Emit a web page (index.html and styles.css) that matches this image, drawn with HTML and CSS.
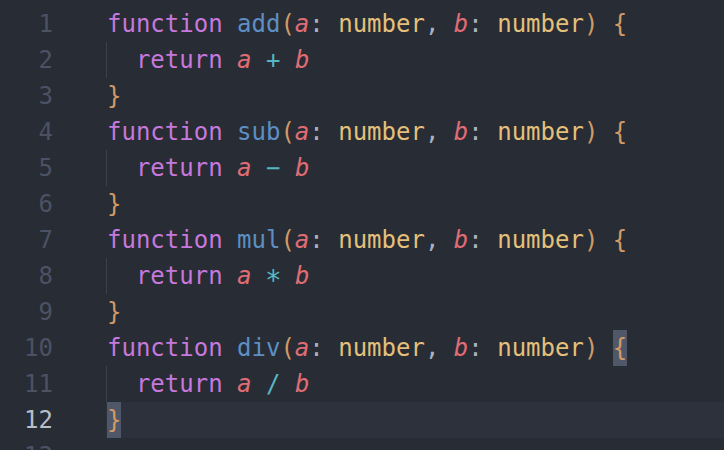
FILE: index.html
```html
<!DOCTYPE html>
<html>
<head>
<meta charset="utf-8">
<link rel="stylesheet" href="styles.css">
</head>
<body>
<div class="editor">
  <div class="line"><span class="num">1</span><span class="code"><span class="kw">function</span> <span class="fn">add</span><span class="pn">(</span><span class="pa">a</span><span class="pu">:</span> <span class="ty">number</span><span class="pu">,</span> <span class="pa">b</span><span class="pu">:</span> <span class="ty">number</span><span class="pn">)</span> <span class="br">{</span></span></div>
  <div class="line"><span class="num">2</span><span class="code"><span class="guide">  </span><span class="kw">return</span> <span class="pa">a</span> <span class="op">+</span> <span class="pa">b</span></span></div>
  <div class="line"><span class="num">3</span><span class="code"><span class="br">}</span></span></div>
  <div class="line"><span class="num">4</span><span class="code"><span class="kw">function</span> <span class="fn">sub</span><span class="pn">(</span><span class="pa">a</span><span class="pu">:</span> <span class="ty">number</span><span class="pu">,</span> <span class="pa">b</span><span class="pu">:</span> <span class="ty">number</span><span class="pn">)</span> <span class="br">{</span></span></div>
  <div class="line"><span class="num">5</span><span class="code"><span class="guide">  </span><span class="kw">return</span> <span class="pa">a</span> <span class="op">−</span> <span class="pa">b</span></span></div>
  <div class="line"><span class="num">6</span><span class="code"><span class="br">}</span></span></div>
  <div class="line"><span class="num">7</span><span class="code"><span class="kw">function</span> <span class="fn">mul</span><span class="pn">(</span><span class="pa">a</span><span class="pu">:</span> <span class="ty">number</span><span class="pu">,</span> <span class="pa">b</span><span class="pu">:</span> <span class="ty">number</span><span class="pn">)</span> <span class="br">{</span></span></div>
  <div class="line"><span class="num">8</span><span class="code"><span class="guide">  </span><span class="kw">return</span> <span class="pa">a</span> <span class="op star">*</span> <span class="pa">b</span></span></div>
  <div class="line"><span class="num">9</span><span class="code"><span class="br">}</span></span></div>
  <div class="line"><span class="num">10</span><span class="code"><span class="kw">function</span> <span class="fn">div</span><span class="pn">(</span><span class="pa">a</span><span class="pu">:</span> <span class="ty">number</span><span class="pu">,</span> <span class="pa">b</span><span class="pu">:</span> <span class="ty">number</span><span class="pn">)</span> <span class="br match">{</span></span></div>
  <div class="line"><span class="num">11</span><span class="code"><span class="guide">  </span><span class="kw">return</span> <span class="pa">a</span> <span class="op">/</span> <span class="pa">b</span></span></div>
  <div class="line active"><span class="num">12</span><span class="code"><span class="br match">}</span></span></div>
  <div class="line"><span class="num">13</span><span class="code"></span></div>
</div>
</body>
</html>
```
FILE: styles.css
```css
html, body {
  margin: 0;
  padding: 0;
  background: #282c34;
  overflow: hidden;
}
.editor {
  padding-top: 6px;
  font-family: "DejaVu Sans Mono", monospace;
  font-size: 24px;
  color: #abb2bf;
}
.line {
  display: flex;
  height: 36px;
  line-height: 36px;
  white-space: pre;
}
.num {
  width: 53px;
  flex: none;
  text-align: right;
  color: #4b5263;
}
.code {
  flex: 1;
  margin-left: 53px;
  padding-left: 1px;
}
.active .code {
  background: #2c313b;
}
.active .num {
  color: #b9bec8;
}
.guide {
  display: inline-block;
  box-shadow: inset 1px 0 0 #3b4049;
  margin-left: -1px;
  padding-left: 1px;
}
.kw { color: #c678dd; }
.fn { color: #5d8fc4; }
.pn { color: #d19a66; }
.pa { color: #e06c75; font-style: italic; }
.pu { color: #abb2bf; }
.ty { color: #e5c07b; }
.br { color: #d19a66; }
.op { color: #56b6c2; }
.star {
  display: inline-block;
  line-height: 1;
  vertical-align: -0.22em;
  transform: scale(1.15);
}
.match {
  display: inline-block;
  background: #4f5768;
}
```
